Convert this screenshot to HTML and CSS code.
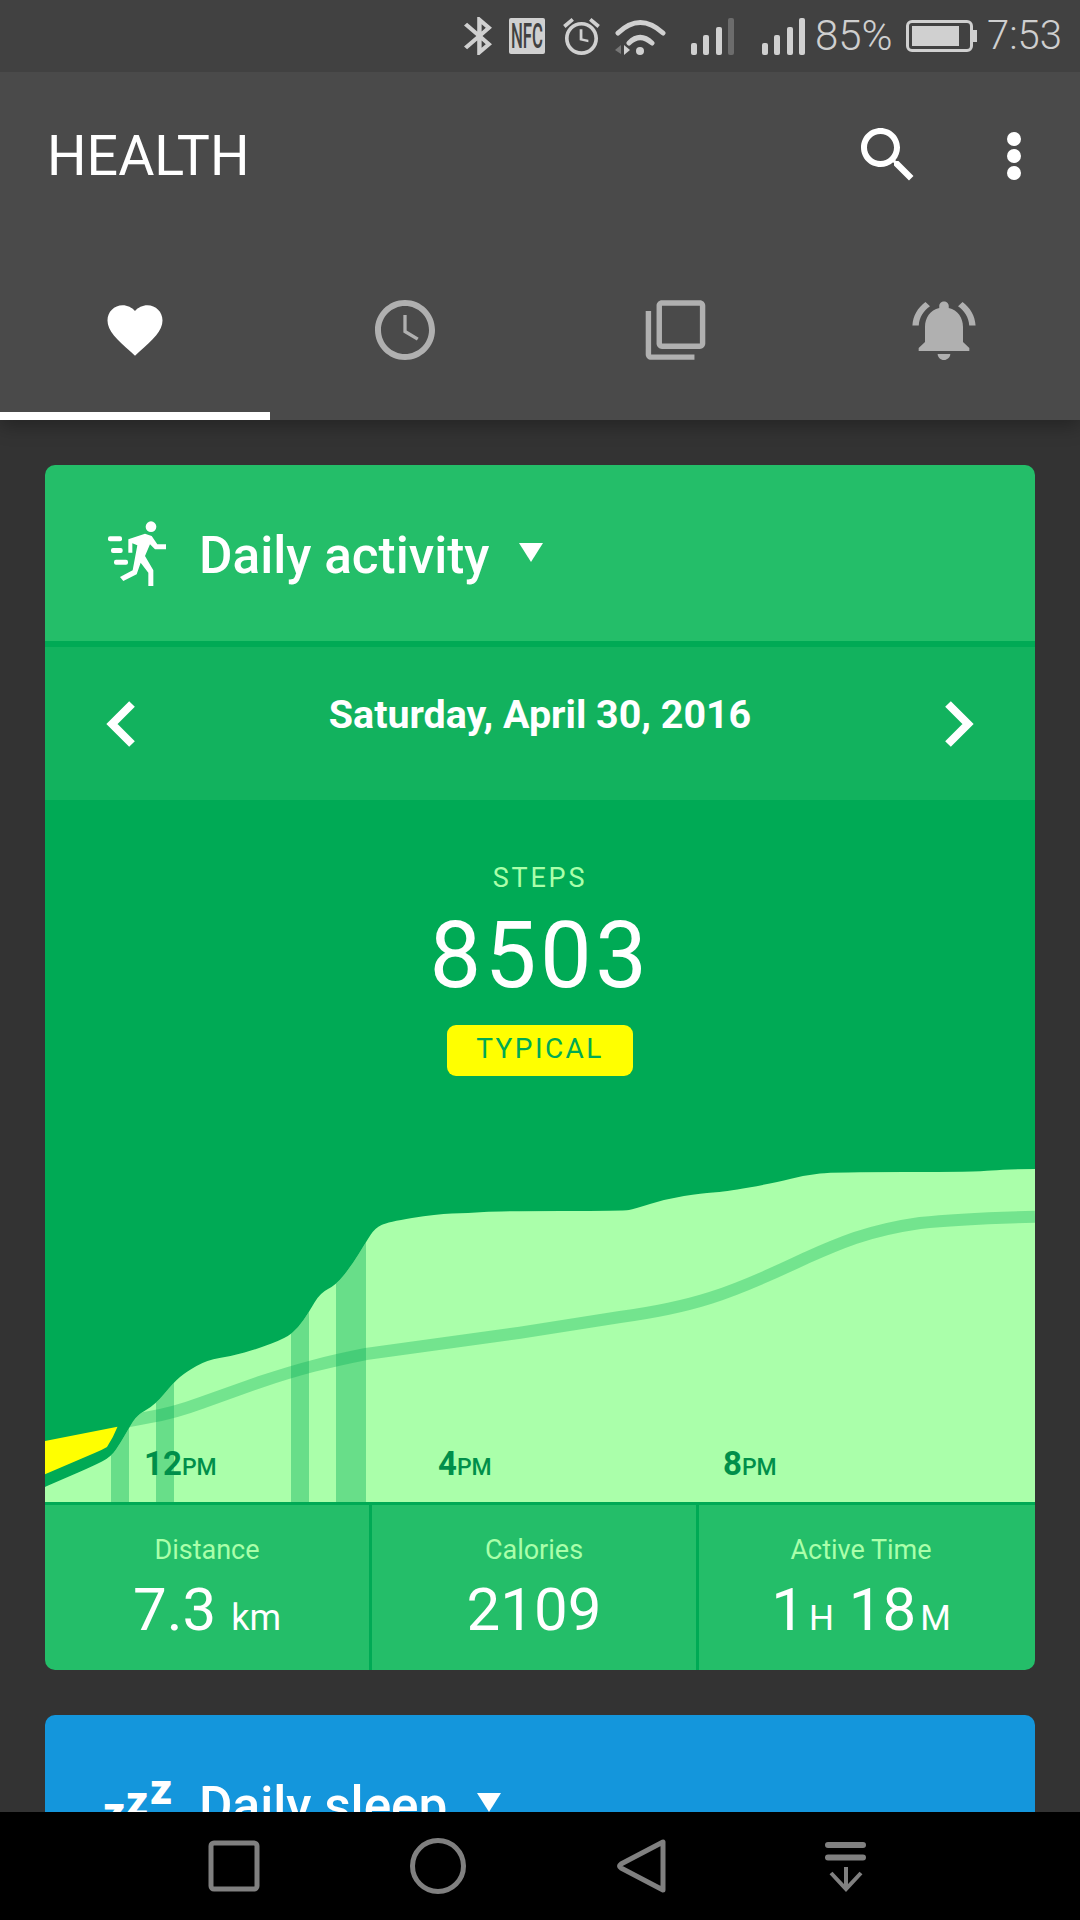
FILE: index.html
```html
<!DOCTYPE html>
<html lang="en">

<head>
    <meta charset="UTF-8">
    <meta name="viewport" content="width=device-width, initial-scale=1.0">
    <title>Health</title>
    <link rel="stylesheet" href="styles.css">
</head>

<body>
    <div class="phone">
        <!-- Status bar -->
        <div class="status-bar">
            <svg class="st-bt" viewBox="5 2 12.71 20" preserveAspectRatio="none"><path d="M17.71 7.71L12 2h-1v7.59L6.41 5 5 6.41 10.59 12 5 17.59 6.41 19 11 14.41V22h1l5.71-5.71-4.3-4.29 4.3-4.29zM13 5.83l1.88 1.88L13 9.59V5.83zm1.88 10.46L13 18.17v-3.76l1.88 1.88z"/></svg>
            <svg class="st-nfc" viewBox="0 0 36 36">
                <rect width="36" height="36" rx="2"/>
                <text x="2" y="30" textLength="32" lengthAdjust="spacingAndGlyphs">NFC</text>
            </svg>
            <svg class="st-alarm" viewBox="2 1.86 20 20.14"><path d="M22 5.72l-4.6-3.86-1.29 1.53 4.6 3.86L22 5.72zM7.88 3.39L6.6 1.86 2 5.71l1.29 1.53 4.59-3.85zM12.5 8H11v6l4.75 1v-1.3l-3.25-.7V8zM12 4c-4.97 0-9 4.03-9 9s4.03 9 9 9 9-4.03 9-9-4.03-9-9-9zm0 16c-3.87 0-7-3.13-7-7s3.13-7 7-7 7 3.13 7 7-3.13 7-7 7z"/></svg>
            <svg class="st-wifi" viewBox="0 0 51 37">
                <path class="arc" d="M3 15Q25 -6 48 15M14 25Q25 14 37 25"/>
                <circle cx="25" cy="33" r="4"/>
                <path class="dim" d="M6 27v9l-6-4z"/>
                <path d="M9 27l6 5-6 5z"/>
            </svg>
            <div class="signal">
                <i class="s1"></i><i class="s2"></i><i class="s3"></i><i class="s4 off"></i>
            </div>
            <div class="signal second">
                <i class="s1"></i><i class="s2"></i><i class="s3"></i><i class="s4"></i>
            </div>
            <span class="st-text st-pct">85%</span>
            <div class="battery"><div class="battery-level"></div></div>
            <span class="st-text st-time">7:53</span>
        </div>

        <!-- App bar -->
        <div class="app-bar">
            <div class="toolbar">
                <h1 class="app-title">HEALTH</h1>
                <svg class="search-icon" viewBox="0 0 24 24"><path d="M15.5 14h-.79l-.28-.27C15.41 12.59 16 11.11 16 9.5 16 5.91 13.09 3 9.5 3S3 5.91 3 9.5 5.91 16 9.5 16c1.61 0 3.09-.59 4.23-1.57l.27.28v.79l5 4.99L20.49 19l-4.99-5zm-6 0C7.01 14 5 11.99 5 9.5S7.01 5 9.5 5 14 7.01 14 9.5 11.99 14 9.5 14z"/></svg>
                <svg class="more-icon" viewBox="0 0 24 24"><circle cx="12" cy="6.33" r="2.33"/><circle cx="12" cy="12" r="2.33"/><circle cx="12" cy="17.67" r="2.33"/></svg>
            </div>
            <div class="tabs">
                <div class="tab active">
                    <svg class="tab-heart" viewBox="0 0 24 24"><path d="M12 21.35l-1.45-1.32C5.4 15.36 2 12.28 2 8.5 2 5.42 4.42 3 7.5 3c1.74 0 3.41.81 4.5 2.09C13.09 3.81 14.76 3 16.5 3 19.58 3 22 5.42 22 8.5c0 3.78-3.4 6.86-8.55 11.54L12 21.35z"/></svg>
                </div>
                <div class="tab">
                    <svg viewBox="0 0 24 24"><path d="M11.99 2C6.47 2 2 6.48 2 12s4.47 10 9.99 10C17.52 22 22 17.52 22 12S17.52 2 11.99 2zM12 20c-4.42 0-8-3.58-8-8s3.58-8 8-8 8 3.58 8 8-3.58 8-8 8zm.55-13h-1.1v5.8l4.5 2.7.6-.95-4-2.35z"/></svg>
                </div>
                <div class="tab">
                    <svg class="tab-copy" viewBox="0 0 24 24"><path d="M3 5H1v16c0 1.1.9 2 2 2h16v-2H3V5zm18-4H7c-1.1 0-2 .9-2 2v14c0 1.1.9 2 2 2h14c1.1 0 2-.9 2-2V3c0-1.1-.9-2-2-2zm0 16H7V3h14v14z"/></svg>
                </div>
                <div class="tab">
                    <svg class="tab-bell" viewBox="0 0 24 24" preserveAspectRatio="none"><path d="M7.58 4.08L6.15 2.65C3.75 4.48 2.17 7.3 2.03 10.5h2c.15-2.65 1.51-4.97 3.55-6.42zm12.39 6.42h2c-.15-3.2-1.73-6.02-4.12-7.85l-1.42 1.43c2.02 1.45 3.39 3.77 3.54 6.42zM18 11c0-3.07-1.64-5.64-4.5-6.32V4c0-.83-.67-1.5-1.5-1.5s-1.5.67-1.5 1.5v.68C7.63 5.36 6 7.92 6 11v5l-2 2v1h16v-1l-2-2v-5zm-6 11c.14 0 .27-.01.4-.04.65-.14 1.18-.58 1.44-1.18.1-.24.15-.5.15-.78h-4c.01 1.1.9 2 2.01 2z"/></svg>
                </div>
            </div>
        </div>

        <!-- Cards -->
        <div class="content">
            <div class="card card-green">
                <div class="card-head head-divider">
                    <svg class="run-icon" viewBox="0 0 240 255">
                        <circle cx="153" cy="47" r="16"/>
                        <path d="M85 85L135 68L155 75L172 100H198V115H165L150 100L135 135L160 178V225H145V185L122 155L110 190L70 210L60 198L98 178L112 103L97 97V125H85Z"/>
                        <rect x="24" y="76" width="42" height="15" rx="6"/>
                        <rect x="33" y="111" width="35" height="15" rx="6"/>
                        <rect x="42" y="146" width="42" height="15" rx="6"/>
                    </svg>
                    <span class="card-title">Daily activity</span>
                    <span class="caret"></span>
                </div>

                <div class="date-row">
                    <svg class="chevron" viewBox="0 0 30 46"><path d="M27 3L7 23L27 43"/></svg>
                    <span class="date-text">Saturday, April 30, 2016</span>
                    <svg class="chevron" viewBox="0 0 30 46"><path d="M3 3L23 23L3 43"/></svg>
                </div>

                <div class="steps">
                    <div class="steps-label">STEPS</div>
                    <div class="steps-count">8503</div>
                    <div class="steps-badge">TYPICAL</div>
                    <svg class="chart" viewBox="45 1140 990 362">
                        <defs>
                            <clipPath id="area-clip">
                                <path d="M45 1487L47 1486L80.5 1471.5Q93 1466 102 1461.5Q111 1457 116 1449.5Q121 1442 125 1435Q129 1428 133 1421.5Q137 1415 146 1410Q155 1405 164.5 1393.5Q174 1382 180 1377Q186 1372 196.5 1366Q207 1360 219.5 1358Q232 1356 244.5 1352.5Q257 1349 271.5 1343.5Q286 1338 292 1333Q298 1328 303.5 1320Q309 1312 314.5 1302.5Q320 1293 328 1289Q336 1285 344 1275Q352 1265 359 1253.5Q366 1242 370.5 1235Q375 1228 381.5 1225Q388 1222 412 1218Q436 1214 452 1213.5Q468 1213 484 1212Q500 1211 562 1211Q624 1211 629 1210Q634 1209 650 1204Q666 1199 684 1196Q702 1193 713 1192.5Q724 1192 749 1187.5Q774 1183 790 1179Q806 1175 820 1173.5Q834 1172 905 1172Q977 1172 991.5 1170.5Q1006 1169 1035 1169V1502H45Z"/>
                            </clipPath>
                        </defs>
                        <g clip-path="url(#area-clip)">
                            <rect class="chart-fill" x="45" y="1140" width="990" height="362"/>
                            <rect class="chart-bar" x="111" y="1140" width="18" height="362"/>
                            <rect class="chart-bar" x="156" y="1140" width="18" height="362"/>
                            <rect class="chart-bar" x="291" y="1140" width="18" height="362"/>
                            <rect class="chart-bar" x="336" y="1140" width="30" height="362"/>
                            <path class="chart-avg" d="M100 1427L129 1421L150 1417Q174 1413 201 1403L260 1382Q291 1371.7 313 1366Q336 1360 366 1354L520 1332.7L620 1317Q672 1310 710 1298Q745 1287 806 1258Q835 1245 855 1238Q885 1228 920 1223Q960 1218.5 1035 1216.7"/>
                        </g>
                        <path class="chart-gap" d="M45 1441L117.5 1426.7Q113 1438 107 1447Q102 1450 94.6 1453L45 1474.3Z"/>
                        <text class="chart-label" x="144" y="1475">12<tspan>PM</tspan></text>
                        <text class="chart-label" x="438" y="1475">4<tspan>PM</tspan></text>
                        <text class="chart-label" x="723" y="1475">8<tspan>PM</tspan></text>
                    </svg>
                </div>

                <div class="stats">
                    <div class="stat">
                        <div class="stat-label">Distance</div>
                        <div class="stat-value">7.3 <small>km</small></div>
                    </div>
                    <div class="stat">
                        <div class="stat-label">Calories</div>
                        <div class="stat-value">2109</div>
                    </div>
                    <div class="stat stat-last">
                        <div class="stat-label">Active Time</div>
                        <div class="stat-value">1<small class="unit">H</small> 18<small class="unit">M</small></div>
                    </div>
                </div>
            </div>

            <div class="card card-blue">
                <div class="card-head">
                    <svg class="zzz-icon" viewBox="0 0 80 85">
                        <text x="3" y="65.5">z</text>
                        <text x="26" y="54.5">z</text>
                        <text x="50" y="42.5">z</text>
                    </svg>
                    <span class="card-title">Daily sleep</span>
                    <span class="caret"></span>
                </div>
            </div>
        </div>

        <!-- Navigation bar -->
        <div class="nav-bar">
            <svg viewBox="0 0 72 72"><rect x="13" y="13" width="46" height="46" rx="3"/></svg>
            <svg viewBox="0 0 72 72"><circle cx="36" cy="36" r="25.5"/></svg>
            <svg viewBox="0 0 72 72"><path d="M57 12V60L15 38Q12 36 15 34Z"/></svg>
            <svg viewBox="0 0 72 72">
                <path class="nav-bars" d="M18 15H53M18 27.5H53"/>
                <path class="nav-arrow" d="M36 37V59M21 43L36 59L51 43"/>
            </svg>
        </div>
    </div>
</body>

</html>
```

FILE: styles.css
```css
* {
    box-sizing: border-box;
}

body {
    margin: 0;
    font-family: Roboto, "Liberation Sans", sans-serif;
    background: #333;
}

.phone {
    width: 1080px;
    height: 1920px;
    display: flex;
    flex-direction: column;
    overflow: hidden;
}

/* Status bar */
.status-bar {
    height: 72px;
    flex: none;
    position: relative;
    z-index: 1;
    display: flex;
    align-items: center;
    justify-content: flex-end;
    padding-right: 20px;
    background: #414141;
    fill: #d0d0d0;
}

.st-bt {
    width: 28px;
    height: 38px;
}

.st-nfc {
    width: 36px;
    height: 36px;
    margin-left: 17px;
}

.st-nfc text {
    font-size: 35px;
    font-weight: 500;
    fill: #414141;
}

.st-alarm {
    width: 37px;
    height: 37px;
    margin-left: 18px;
}

.st-wifi {
    width: 51px;
    height: 37px;
    margin-left: 15px;
}

.st-wifi .arc {
    fill: none;
    stroke: #d0d0d0;
    stroke-width: 5px;
    stroke-linecap: round;
}

.st-wifi .dim {
    fill: #777;
}

.signal {
    width: 43px;
    height: 37px;
    margin-left: 25px;
    display: flex;
    align-items: flex-end;
    justify-content: space-between;
}

.signal.second {
    margin-left: 28px;
}

.signal i {
    width: 6px;
    border-radius: 2px;
    background: #d0d0d0;
}

.signal .s1 {
    height: 12px;
}

.signal .s2 {
    height: 20px;
}

.signal .s3 {
    height: 28px;
}

.signal .s4 {
    height: 37px;
}

.signal .off {
    background: #6c6c6c;
}

.st-text {
    font-size: 40px;
    line-height: 40px;
    color: #cfcfcf;
    font-weight: 300;
}

.st-pct {
    margin-left: 10px;
    width: 78px;
    font-size: 42px;
}

.st-time {
    margin-left: 14px;
    width: 73px;
}

.battery {
    width: 67px;
    height: 32px;
    margin-left: 13px;
    position: relative;
    border: 3px solid #d0d0d0;
    border-radius: 6px;
    padding: 3px;
}

.battery::after {
    content: "";
    position: absolute;
    right: -7px;
    top: 7px;
    width: 4px;
    height: 12px;
    background: #d0d0d0;
}

.battery-level {
    width: 47px;
    height: 100%;
    background: #d0d0d0;
}

/* App bar */
.app-bar {
    flex: none;
    position: relative;
    background: #4a4a4a;
    box-shadow: 0 6px 18px rgba(0, 0, 0, 0.3);
}

.toolbar {
    height: 150px;
    padding: 16px 30px 0 47px;
    display: flex;
    align-items: center;
    fill: #fff;
}

.app-title {
    flex: 1;
    margin: 0;
    padding-top: 2px;
    color: #fff;
    font-size: 55.5px;
    font-weight: 400;
}

.search-icon {
    width: 72px;
    height: 72px;
    margin-right: 54px;
}

.more-icon {
    width: 72px;
    height: 72px;
    margin-top: 2px;
}

.tabs {
    display: grid;
    grid-template-columns: repeat(4, 270px);
}

.tab {
    height: 198px;
    padding-top: 72px;
    display: flex;
    justify-content: center;
    border-bottom: 8px solid transparent;
    fill: #b0b0b0;
}

.tab svg {
    width: 72px;
    height: 72px;
}

.tab.active {
    border-bottom-color: #fff;
    fill: #fff;
}

.tab svg.tab-heart {
    width: 66px;
}

.tab svg.tab-copy {
    width: 65px;
}

.tab svg.tab-bell {
    width: 76px;
    margin-left: -3px;
}

/* Cards */
.content {
    flex: 1;
    min-height: 0;
    overflow: hidden;
    padding: 45px;
    display: flex;
    flex-direction: column;
    gap: 45px;
}

.card {
    flex: none;
    border-radius: 10px;
    overflow: hidden;
    color: #fff;
}

.card-green {
    background: #24be69;
}

.card-blue {
    background: #1496dc;
    height: 300px;
}

.card-head {
    height: 176px;
    padding-left: 55px;
    display: flex;
    align-items: center;
    fill: #fff;
}

.head-divider {
    height: 182px;
    border-bottom: 6px solid #00aa55;
}

.run-icon,
.zzz-icon {
    width: 80px;
    height: 85px;
    flex: none;
}

.zzz-icon text {
    font-size: 43px;
    font-weight: 900;
}

.card-title {
    margin-left: 19px;
    font-size: 51.3px;
    font-weight: 500;
    line-height: 60px;
    padding-top: 5px;
}

.caret {
    margin-left: 30px;
    margin-bottom: 1px;
    width: 0;
    height: 0;
    border-left: 12px solid transparent;
    border-right: 12px solid transparent;
    border-top: 19px solid #fff;
}

.date-row {
    height: 153px;
    padding: 0 60px;
    display: flex;
    align-items: center;
    justify-content: space-between;
    background: #12b25e;
}

.chevron {
    width: 30px;
    height: 46px;
    fill: none;
    stroke: #fff;
    stroke-width: 8px;
}

.date-text {
    font-size: 39.4px;
    font-weight: 700;
    line-height: 46px;
    margin-bottom: 18px;
}

.steps {
    padding-top: 61px;
    display: flex;
    flex-direction: column;
    align-items: center;
    background: #00aa55;
}

.steps-label {
    font-size: 27px;
    line-height: 34px;
    letter-spacing: 2.8px;
    color: #aaffaa;
}

.steps-count {
    margin-top: 11px;
    font-size: 92px;
    line-height: 100px;
    letter-spacing: 3.5px;
}

.steps-badge {
    margin-top: 19px;
    width: 186px;
    height: 51px;
    border-radius: 9px;
    background: #ffff00;
    color: #00aa55;
    font-size: 28px;
    line-height: 48px;
    letter-spacing: 2.4px;
    text-align: center;
}

.chart {
    display: block;
    width: 990px;
    height: 362px;
    margin-top: 64px;
}

.chart-fill {
    fill: #aaffaa;
}

.chart-bar {
    fill: #00aa55;
    fill-opacity: 0.39;
}

.chart-avg {
    fill: none;
    stroke: #00aa55;
    stroke-opacity: 0.32;
    stroke-width: 12px;
}

.chart-gap {
    fill: #ffff00;
}

.chart-label {
    fill: #008f4a;
    font-size: 33px;
    font-weight: 700;
}

.chart-label tspan {
    font-size: 23px;
    font-weight: 500;
}

.stats {
    height: 168px;
    display: grid;
    grid-template-columns: 327px 327px 336px;
    border-top: 3px solid #00aa55;
}

.stat {
    padding-top: 28px;
    border-right: 3px solid #00aa55;
    text-align: center;
}

.stat-last {
    padding-right: 12px;
    border-right: none;
}

.stat-label {
    font-size: 27px;
    line-height: 34px;
    color: #aaffaa;
}

.stat-value {
    margin-top: 8px;
    font-size: 60px;
    line-height: 70px;
}

.stat-value small {
    font-size: 36px;
}

.stat-value .unit {
    font-size: 35px;
    margin-left: 4px;
}

/* Navigation bar */
.nav-bar {
    height: 108px;
    flex: none;
    position: relative;
    background: #000;
    display: flex;
    align-items: center;
    justify-content: center;
    gap: 132px;
}

.nav-bar svg {
    width: 72px;
    height: 72px;
    fill: none;
    stroke: #808080;
    stroke-width: 5px;
    stroke-linejoin: round;
}

.nav-bar .nav-bars {
    stroke-width: 6px;
    stroke-linecap: round;
}

.nav-bar .nav-arrow {
    stroke-width: 4px;
    stroke-linejoin: miter;
}
```
